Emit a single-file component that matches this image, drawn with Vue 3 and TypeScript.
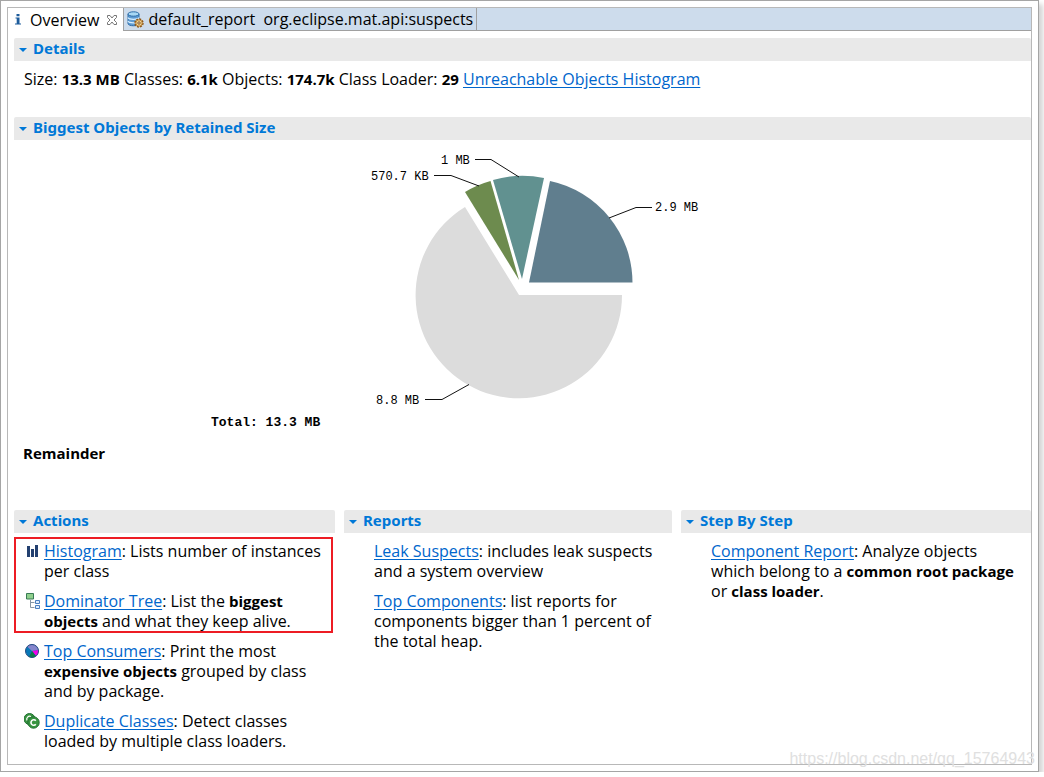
<script setup lang="ts">
interface Slice {
  label: string
  color: string
  path: string
  leader: string
  x: number
  y: number
}

const slices: Slice[] = [
  { label: '2.9 MB', color: '#607e8e', path: 'M529 282.5H632.5A104 104 0 0 0 550 181Z', leader: '609,218 636,207.5 652,207.5', x: 655, y: 211 },
  { label: '1 MB', color: '#619190', path: 'M522 279L544 178A103 103 0 0 0 493 180Z', leader: '519,177 491,159.5 475,159.5', x: 441, y: 164 },
  { label: '570.7 KB', color: '#6d8b4e', path: 'M519 280L490.5 181A103 103 0 0 0 465 192Z', leader: '479,186 451,175.5 434,175.5', x: 371, y: 180 },
  { label: '8.8 MB', color: '#dcdcdc', path: 'M519 295H622A103.2 103.2 0 1 1 465 207Z', leader: '469,384.5 442,399.5 425,399.5', x: 376, y: 404 },
]

const href = '#'
</script>

<template>
  <div class="window">
    <div class="editor">
      <nav class="tabs">
        <button class="tab active" type="button">
          <svg class="info" width="10" height="16" viewBox="0 0 10 16" aria-hidden="true">
            <path d="M3.500 2h3v2.200h-3zM2.500 5.500h4v6h1.500v1h-6v-1h1.700v-5h-1.200z" fill="#1d5c9c" />
          </svg>
          <span>Overview</span>
          <svg width="12" height="12" viewBox="0 0 12 12" aria-hidden="true">
            <path d="M1.500 1.500h2.500l2 2.500 2-2.500h2.500v2l-2.500 2.500 2.500 2.500v2h-2.500l-2-2.500-2 2.500h-2.500v-2l2.500-2.500-2.500-2.500z" fill="#fff" stroke="#777" stroke-width="1" />
          </svg>
        </button>
        <button class="tab report" type="button">
          <svg width="17" height="17" viewBox="0 0 17 17" aria-hidden="true">
            <path d="M1 3v9.500c0 3 11 3 11 0V3" fill="#5d9bd3" stroke="#2d6ca8" />
            <path d="M1 6.500c1 2.400 10 2.400 11 0M1 10c1 2.400 10 2.400 11 0" fill="none" stroke="#d8efff" stroke-width="1.200" />
            <ellipse cx="6.500" cy="3" rx="5.500" ry="2.200" fill="#a8d8f4" stroke="#2d6ca8" />
            <circle cx="12" cy="12" r="4" fill="#f5d894" stroke="#8a5418" stroke-width="1.400" stroke-dasharray="2 1.100" />
            <circle cx="12" cy="12" r="3.200" fill="#f5d894" stroke="#a06a28" stroke-width=".8" />
            <circle cx="12" cy="12" r="1.200" fill="#fff" stroke="#7a4a16" />
          </svg>
          <span>default_report&nbsp; org.eclipse.mat.api:suspects</span>
        </button>
      </nav>

      <main class="content">
        <section class="details">
          <h2><i class="arrow"></i><span>Details</span></h2>
          <p class="summary">
            Size: <b>13.3 MB</b> Classes: <b>6.1k</b> Objects: <b>174.7k</b> Class Loader: <b>29</b> <a :href="href">Unreachable Objects Histogram</a>
          </p>
        </section>

        <section class="biggest">
          <h2><i class="arrow"></i><span>Biggest Objects by Retained Size</span></h2>
          <svg class="chart" width="520" height="290" viewBox="200 140 520 290" role="img" aria-label="Retained size by object">
            <g v-for="s in slices" :key="s.label">
              <path :d="s.path" :fill="s.color" />
              <polyline :points="s.leader" fill="none" stroke="#111" stroke-width="1" />
              <text class="value" :x="s.x" :y="s.y">{{ s.label }}</text>
            </g>
            <text class="total" x="211" y="426">Total: 13.3 MB</text>
          </svg>
          <p class="remainder">Remainder</p>
        </section>

        <div class="columns">
          <section>
            <h2><i class="arrow"></i><span>Actions</span></h2>
            <div class="entries">
              <div class="marked">
                <p>
                  <svg width="16" height="16" viewBox="0 0 16 16" aria-hidden="true">
                    <path d="M3 3h3v11h-3zM7 6h3v8h-3zM11 2h3v12h-3z" fill="#234070" />
                  </svg>
                  <a :href="href">Histogram</a>: Lists number of instances per class
                </p>
                <p>
                  <svg width="16" height="16" viewBox="0 0 16 16" aria-hidden="true">
                    <path d="M6.500 7v7.500h4M6.500 9.500h4" fill="none" stroke="#8796a5" />
                    <path d="M2.500.5h7v5.500h-7z" fill="#8fcf8c" stroke="#387b55" />
                    <path d="M11.500 7.500h4v3h-4zM11.500 12.500h4v3h-4z" fill="#dcecff" stroke="#4b7fc0" />
                  </svg>
                  <a :href="href">Dominator Tree</a>: List the <b>biggest objects</b> and what they keep alive.
                </p>
              </div>
              <p>
                <svg width="16" height="16" viewBox="0 0 16 16" aria-hidden="true">
                  <circle cx="8" cy="8" r="6.500" fill="#0878b8" />
                  <path d="M8 8L3 3.500A6.500 6.500 0 0 1 14.300 7z" fill="#8585cc" />
                  <path d="M8 8L14.400 7A6.500 6.500 0 0 1 12 13z" fill="#f000e8" />
                  <path d="M8 8L12 13A6.500 6.500 0 0 1 5 13.800z" fill="#087c48" />
                  <circle cx="8" cy="8" r="6.500" fill="none" stroke="#274c82" />
                </svg>
                <a :href="href">Top Consumers</a>: Print the most <b>expensive objects</b> grouped by class and by package.
              </p>
              <p>
                <svg width="16" height="16" viewBox="1 0 16 16" aria-hidden="true">
                  <circle cx="6.500" cy="6" r="5.500" fill="#389440" stroke="#237134" />
                  <path d="M8 3.500a3 3 0 0 0-4 4" fill="none" stroke="#fff" stroke-width="1.200" />
                  <circle cx="10.500" cy="9.500" r="5.700" fill="#389440" stroke="#237134" />
                  <path d="M12.800 7.800a2.700 2.700 0 1 0 0 3.400" fill="none" stroke="#fff" stroke-width="1.600" />
                </svg>
                <a :href="href">Duplicate Classes</a>: Detect classes loaded by multiple class loaders.
              </p>
            </div>
          </section>
          <section>
            <h2><i class="arrow"></i><span>Reports</span></h2>
            <div class="entries">
              <p><a :href="href">Leak Suspects</a>: includes leak suspects and a system overview</p>
              <p><a :href="href">Top Components</a>: list reports for components bigger than 1 percent of the total heap.</p>
            </div>
          </section>
          <section>
            <h2><i class="arrow"></i><span>Step By Step</span></h2>
            <div class="entries">
              <p><a :href="href">Component Report</a>: Analyze objects which belong to a <b>common root package</b> or <b>class loader</b>.</p>
            </div>
          </section>
        </div>
      </main>
    </div>
    <span class="watermark">https://blog.csdn.net/qq_15764943</span>
  </div>
</template>

<style>
body {
  background: #fff;
}
</style>

<style scoped>
.window {
  position: relative;
  margin-right: 5px;
  padding: 6px;
  border: 1px solid #a5a5a5;
  background: #fff;
  box-shadow: 4px 4px 5px #d4d4d4;
  color: #000;
  font: 16px/20px "Open Sans", "Noto Sans", sans-serif;
}
.editor {
  border: 1px solid #b8b8b8;
}
.tabs {
  display: flex;
  height: 22px;
  background: #cddcec;
  border-bottom: 1px solid #a0a0a0;
}
.tab {
  display: flex;
  align-items: center;
  gap: 4px;
  margin: 0;
  padding: 0 3px;
  border: 0;
  border-right: 1px solid #a0a0a0;
  background: none;
  color: inherit;
  font: inherit;
  white-space: nowrap;
}
.tab.active {
  height: 23px;
  padding: 0 5px;
  gap: 7px;
  background: #fff;
}
.content {
  padding: 7px 0 13px 6px;
}
h2 {
  display: flex;
  align-items: center;
  gap: 6px;
  height: 23px;
  margin: 0;
  padding: 0 0 0 5px;
  border-radius: 2px 2px 0 0;
  background: #e9e9e9;
  color: #0078d7;
  font-family: "Noto Sans", "Open Sans", sans-serif;
  font-size: 15px;
  font-weight: 700;
}
h2 span {
  padding-bottom: 4px;
}
.arrow {
  border: 4px solid transparent;
  border-top-color: #0078d7;
  border-bottom: 0;
}
p {
  margin: 0;
}
b {
  font-size: 15px;
}
a {
  color: #0066cc;
  text-underline-offset: 2px;
}
.summary {
  padding: 8px 10px 28px;
}
.chart {
  display: block;
  margin-left: 186px;
}
.value {
  font: 12px "Liberation Mono", monospace;
}
.total {
  font: bold 13px "Liberation Mono", monospace;
}
.remainder {
  padding: 13px 9px 47px;
  font-size: 15px;
  font-weight: 700;
}
.columns {
  display: grid;
  grid-template-columns: 321fr 328fr 350fr;
  gap: 9px;
}
.entries {
  display: flex;
  flex-direction: column;
  gap: 10px;
  padding-top: 8px;
}
.entries p {
  position: relative;
  padding: 0 10px 0 30px;
}
.entries svg {
  position: absolute;
  left: 10px;
  top: 2px;
}
.marked {
  position: relative;
  display: flex;
  flex-direction: column;
  gap: 10px;
}
.marked::after {
  content: "";
  position: absolute;
  inset: -4px 2px -2px 0;
  border: 2px solid #ed1c24;
  pointer-events: none;
}
.watermark {
  position: absolute;
  right: 3px;
  bottom: 2px;
  color: #e0e0e0;
  font: 16px/20px "Liberation Sans", sans-serif;
}
</style>
